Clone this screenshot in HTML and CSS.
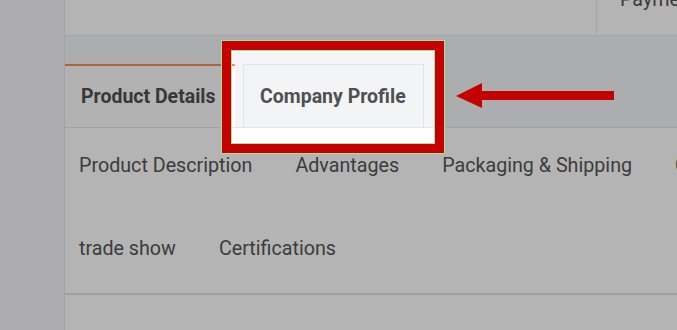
FILE: index.html
```html
<!DOCTYPE html>
<html lang="en">
<head>
<meta charset="utf-8">
<title>Product Details</title>
<link rel="stylesheet" href="styles.css">
</head>
<body>
<div class="page">
  <div class="rail"></div>
  <div class="main">
    <div class="summary">
      <div class="summary-cell"></div>
      <div class="summary-cell summary-cell--pay"><span class="pay-label">Payment</span></div>
    </div>
    <div class="tabs">
      <div class="tab tab--active">Product Details</div>
      <div class="tab tab--plain">Company Profile</div>
    </div>
    <div class="detail">
      <ul class="anchors">
        <li>Product Description</li>
        <li>Advantages</li>
        <li>Packaging &amp; Shipping</li>
        <li>Company Information</li>
        <li>trade show</li>
        <li>Certifications</li>
      </ul>
    </div>
    <div class="more"></div>
  </div>
</div>
<div class="spot"></div>
<svg class="arrow" width="170" height="36" viewBox="0 0 170 36">
  <polygon points="6,18 32,5 32,13 164,13 164,22 32,22 32,30" fill="#c40000"/>
</svg>
</body>
</html>
```
FILE: styles.css
```css
html, body {
  margin: 0;
  padding: 0;
  overflow: hidden;
  width: 677px;
  height: 330px;
}
body {
  background: #f5f5f8;
  font-family: Roboto, "Liberation Sans", sans-serif;
  color: #555;
  position: relative;
}
.page {
  display: flex;
  width: 960px;
}
.rail {
  width: 64px;
  flex: none;
  background: #f5f5f8;
}
.main {
  width: 880px;
  flex: none;
  border-left: 1px solid #e6e7ef;
  background: #f4f5f7;
}
.summary {
  display: flex;
  height: 35px;
  background: #fff;
  border-bottom: 1px solid #ebebeb;
  overflow: hidden;
}
.summary-cell {
  width: 531px;
  border-right: 1px solid #e9e9e9;
}
.summary-cell--pay {
  flex: 1;
  border-right: none;
  padding-left: 23px;
}
.pay-label {
  display: block;
  margin-top: -10px;
  font-size: 19.7px;
  line-height: 20px;
  color: #555;
}
.tabs {
  display: flex;
  margin-top: 28px;
  height: 63px;
  border-bottom: 1px solid #e6e6e6;
}
.tab {
  box-sizing: border-box;
  height: 63px;
  display: flex;
  align-items: center;
  padding-left: 16px;
  font-size: 19.5px;
  font-weight: 700;
  color: #505050;
}
.tab--active {
  width: 170px;
  background: #fdfdfd;
  border-top: 2px solid #ff8e55;
}
.tab--plain {
  margin-left: 8px;
  width: 181px;
  background: #f3f4f6;
  border: 1px solid #e3e3e3;
  border-bottom: none;
}
.detail {
  background: #fff;
  border-bottom: 2px solid #e3e3e3;
  padding: 2px 0 8px 14px;
}
.anchors {
  list-style: none;
  margin: 0;
  padding: 0;
  display: flex;
  flex-wrap: wrap;
  width: 840px;
  row-gap: 11px;
}
.anchors li {
  padding: 26px 0;
  margin-right: 43px;
  font-size: 19.7px;
  line-height: 20px;
  color: #565656;
}
.more {
  height: 60px;
  background: #fff;
}
.spot {
  position: absolute;
  left: 222px;
  top: 41px;
  width: 222px;
  height: 112px;
  box-sizing: border-box;
  border: 10px solid #c40000;
  outline: 1px solid #9fe39f;
  box-shadow: 0 0 0 2000px rgba(0, 0, 0, 0.294);
}
.spot::after {
  content: "";
  position: absolute;
  inset: 0;
  border: 1px solid #9fe39f;
  margin: -1px;
}
.arrow {
  position: absolute;
  left: 450px;
  top: 78px;
}
```
